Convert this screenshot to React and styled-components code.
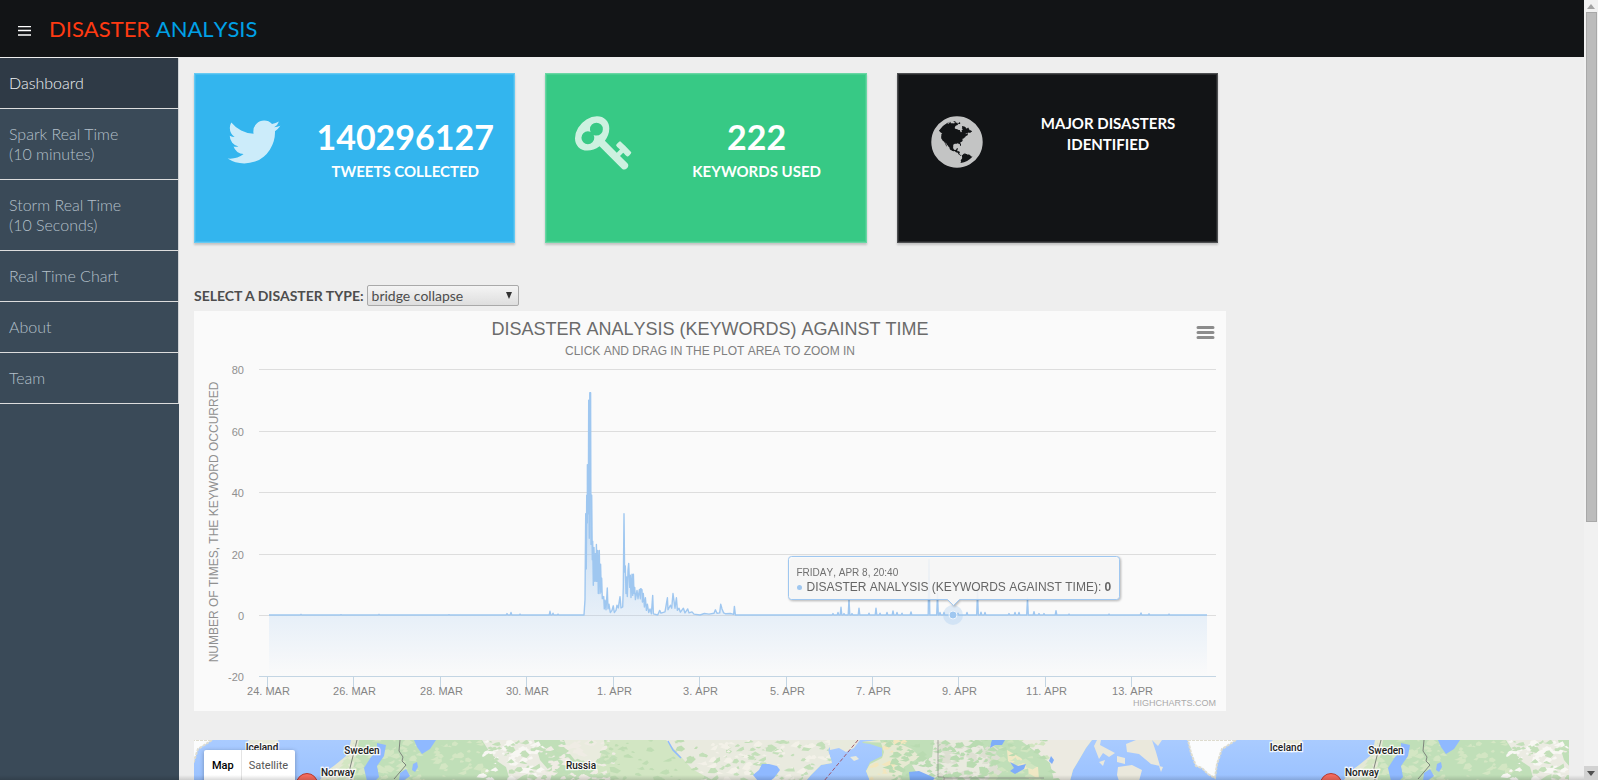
import React, { useLayoutEffect, useRef, useState } from "react";
import styled, { createGlobalStyle } from "styled-components";

const GlobalStyle = createGlobalStyle`
  *, *::before, *::after { box-sizing: border-box; }
  html, body { margin: 0; height: 100%; overflow: hidden; }
  body { font-family: Lato, "Liberation Sans", sans-serif; font-size: 14px; line-height: 20px; color: #4d4d4d; background: #eeeeee; }
  #root { height: 100%; }
`;

const Window = styled.div`
  display: flex;
  height: 100vh;
  position: relative;
`;

const Page = styled.div`
  flex: 1;
  min-width: 0;
  display: flex;
  flex-direction: column;
`;

const Header = styled.header`
  flex: none;
  display: flex;
  align-items: center;
  height: 58px;
  padding: 0 18px;
  gap: 18px;
  background: #121416;
  border-bottom: 1px solid #eeeeee;
`;

const MenuButton = styled.button`
  display: flex;
  padding: 4px 0 0;
  border: 0;
  background: none;
  color: #ffffff;
`;

const Brand = styled.a`
  font-size: 22px;
  font-kerning: none;
  line-height: 28px;
  text-decoration: none;
  color: #ff3a12;
`;

const BrandAccent = styled.span`
  color: #00a0e6;
`;

const Body = styled.div`
  flex: 1;
  min-height: 0;
  display: flex;
`;

const Sidebar = styled.nav`
  flex: none;
  width: 179px;
  background: #3a4a58;
`;

const NavLink = styled.a`
  display: block;
  padding: 15px 9px;
  font-size: 16px;
  font-weight: 300;
  line-height: 20px;
  text-decoration: none;
  white-space: pre-line;
  color: ${(p) => (p.$active ? "#f0f2f4" : "#b4c0ca")};
  background: ${(p) => (p.$active ? "#2f3a46" : "transparent")};
  border-bottom: 1px solid #dddddd;
  border-right: 1px solid #cfd2d5;
`;

const Main = styled.main`
  flex: 1;
  min-width: 0;
  display: flex;
  flex-direction: column;
  padding: 15px 15px 0;
  overflow: hidden;
`;

const Cards = styled.section`
  flex: none;
  display: grid;
  grid-template-columns: repeat(3, 1fr);
  gap: 30px;
  width: calc(75% - 7px);
`;

const Card = styled.article`
  display: flex;
  height: 170px;
  padding: 38px 13px 0 29px;
  color: #ffffff;
  background: ${(p) => p.$color};
  border: 1px solid ${(p) => p.$edge};
  box-shadow: 0 2px 2px rgba(0, 0, 0, 0.18), inset 0 0 0 1px rgba(255, 255, 255, 0.1);
`;

const CardIcon = styled.svg`
  flex: none;
  width: 60px;
  height: 60px;
  fill: #ffffff;
  opacity: 0.75;
`;

const CardText = styled.div`
  flex: 1;
  padding: 1px 0 0 25px;
  text-align: center;
`;

const CardNumber = styled.div`
  font-size: 34px;
  font-weight: 700;
  line-height: 48px;
`;

const CardLabel = styled.div`
  font-size: 15px;
  font-weight: 700;
  line-height: 21px;
`;

const Filter = styled.div`
  flex: none;
  display: flex;
  align-items: center;
  gap: 3px;
  margin: 42px 0 5px;
`;

const FilterLabel = styled.label`
  font-weight: 700;
`;

const Picker = styled.select`
  appearance: none;
  width: 152px;
  height: 21px;
  padding: 0 4px;
  font: inherit;
  color: #4d4d4d;
  border: 1px solid #a9a9a9;
  border-radius: 2px;
  background:
    url("data:image/svg+xml,%3Csvg xmlns='http://www.w3.org/2000/svg' width='6' height='7'%3E%3Cpath d='M0 0h6L3 7z' fill='%23333'/%3E%3C/svg%3E") no-repeat right 6px top 6px,
    linear-gradient(#f4f4f4, #dedede);
`;

const ChartPanel = styled.section`
  flex: none;
  width: calc(75% + 1px);
  height: 400px;
  background: #fafafa;
`;

const ChartSvg = styled.svg`
  display: block;
  width: 100%;
  height: 400px;
  font-family: "Liberation Sans", Arial, sans-serif;
  font-kerning: none;
`;

const TooltipGroup = styled.g`
  filter: drop-shadow(1px 1px 1px rgba(0, 0, 0, 0.3));
`;

const MapPanel = styled.section`
  flex: 1;
  min-height: 0;
  display: flex;
  position: relative;
  margin-top: 29px;
  overflow: hidden;
  background: #a3c8ff;
`;

const MapSvg = styled.svg`
  flex: 1;
  min-width: 0;
  height: 100%;
  font-family: Roboto, "Liberation Sans", sans-serif;
`;

const MapTypes = styled.div`
  position: absolute;
  left: 10px;
  top: 10px;
  display: flex;
  height: 34px;
  background: #ffffff;
  border-radius: 2px 2px 0 0;
  box-shadow: 0 1px 4px rgba(0, 0, 0, 0.3);
`;

const MapType = styled.button`
  padding: 0 7px 4px;
  border: 0;
  border-left: ${(p) => (p.$active ? "1px solid transparent" : "1px solid #e4e4e4")};
  background: none;
  font-family: Roboto, "Liberation Sans", sans-serif;
  font-size: 11px;
  font-weight: ${(p) => (p.$active ? 500 : 400)};
  color: ${(p) => (p.$active ? "#000000" : "#565656")};
`;

const BottomShade = styled.div`
  position: absolute;
  left: 0;
  right: 14px;
  bottom: 0;
  height: 5px;
  background: linear-gradient(transparent, rgba(0, 0, 0, 0.14));
  pointer-events: none;
`;

const ScrollBar = styled.div`
  flex: none;
  display: flex;
  flex-direction: column;
  width: 14px;
  background: #f1f1f1;
`;

const ScrollArrow = styled.button`
  display: flex;
  flex: none;
  align-items: center;
  justify-content: center;
  height: ${(p) => (p.$down ? 14 : 12)}px;
  padding: 0;
  border: 0;
  color: ${(p) => (p.$down ? "#505050" : "#a3a3a3")};
  background: ${(p) => (p.$down ? "#d2d2d2" : "#f1f1f1")};
`;

const ScrollTrack = styled.div`
  flex: 1;
  padding: 0 1px 0 2px;
`;

const ScrollThumb = styled.div`
  height: calc(68% - 3px);
  background: #bcbcbc;
  border: 1px solid #a8a8a8;
`;

const TWITTER =
  "M1684 408q-67 98-162 167 1 14 1 42 0 130-38 259.5t-115.5 248.5-184.5 210.5-258 146-323 54.5q-271 0-496-145 35 4 78 4 225 0 401-138-105-2-188-64.5t-114-159.5q33 5 61 5 43 0 85-11-112-23-185.5-111.5t-73.5-205.5v-4q68 38 146 41-66-44-105-115t-39-154q0-88 44-163 121 149 294.5 238.5t371.5 99.5q-8-38-8-74 0-134 94.5-228.5t228.5-94.5q140 0 236 102 109-21 205-78-37 115-142 178 93-10 186-50z";
const KEY =
  "M832 512q0-80-56-136t-136-56-136 56-56 136q0 42 19 83-41-19-83-19-80 0-136 56t-56 136 56 136 136 56 136-56 56-136q0-42-19-83 41 19 83 19 80 0 136-56t56-136zm851 704q0 17-49 66t-66 49q-9 0-28.5-16t-36.5-33-38.5-40-24.5-26l-96 96 220 220q28 28 28 68 0 42-39 81t-81 39q-40 0-68-28l-671-671q-176 131-365 131-163 0-265.5-102.5t-102.5-265.5q0-160 95-313t248-248 313-95q163 0 265.5 102.5t102.5 265.5q0 189-131 365l355 355 96-96q-3-3-26-24.5t-40-38.5-33-36.5-16-28.5q0-17 49-66t66-49q13 0 23 10 6 6 46 44.5t82 79.5 86.5 86 73 78 28.5 41z";
const GLOBE =
  "M896 128q209 0 385.5 103t279.5 279.5 103 385.5-103 385.5-279.5 279.5-385.5 103-385.5-103-279.5-279.5-103-385.5 103-385.5 279.5-279.5 385.5-103zm274 521q-2 1-9.5 9.5t-13.5 9.5q2 0 4.5-5t5-11 3.5-7q6-7 22-15 14-6 52-12 34-8 51 11-2-2 9.5-13t14.5-12q3-2 15-4.5t15-7.5l2-22q-12 1-17.5-7t-6.5-21q0 2-6 8 0-7-4.5-8t-11.5 1-9 1q-10-3-15-7.5t-8-16.5-4-15q-2-5-9.5-11t-9.5-10q-1-2-2.5-5.5t-3-6.5-4-5.5-5.5-2.5-7 5-7.5 10-4.5 5q-3-2-6-1.5t-4.5 1-4.5 3-5 3.5q-3 2-8.5 3t-8.5 2q15-5-1-11-10-4-16-3 9-4 7.5-12t-8.5-14h5q-1-4-8.5-8.5t-17.5-8.5-13-6q-8-5-34-9.5t-33-.5q-5 6-4.5 10.5t4 14 3.5 12.5q1 6-5.5 13t-6.5 12q0 7 14 15.5t10 21.5q-3 8-16 16t-16 12q-5 8-1.5 18.5t10.5 16.5q2 2 1.5 4t-3.5 4.5-5.5 4-6.5 3.5l-3 2q-11 5-20.5-6t-13.5-26q-7-25-16-30-23-8-29 1-5-13-41-26-25-9-58-4 6-1 0-15-7-15-19-12 3-6 4-17.5t1-13.5q3-13 12-23 1-1 7-8.5t9.5-13.5.5-6q35 4 50-11 5-5 11.5-17t10.5-17q9-6 14-5.5t14.5 5.5 14.5 5q14 1 15.5-11t-7.5-20q12 1 3-17-4-7-8-9-12-4-27 5-8 4 2 8-1-1-9.5 10.5t-16.5 17.5-16-5q-1-1-5.5-13.5t-9.5-13.5q-8 0-16 15 3-8-11-15t-24-8q19-12-8-27-7-4-20.5-5t-19.5 4q-5 7-5.5 11.5t5 8 10.5 5.5 11.5 4 8.5 3q14 10 8 14-2 1-8.5 3.5t-11.5 4.5-6 4q-3 4 0 14t-2 14q-5-5-9-17.5t-7-16.5q7 9-25 6l-10-1q-4 0-16 2t-20.5 1-13.5-8q-4-8 0-20 1-4 4-2-4-3-11-9.5t-10-8.5q-46 15-94 41 6 1 12-1 5-2 13-6.5t10-5.5q34-14 42-7l5-5q14 16 20 25-7-4-30-1-20 6-22 12 7 12 5 18-4-3-11.5-10t-14.5-11-15-5q-16 0-22 1-146 80-235 222 7 7 12 8 4 1 5 9t2.5 11 11.5-3q9 8 3 19 1-1 44 27 19 17 21 21 3 11-10 18-1-2-9-9t-9-4q-3 5 .5 18.5t10.5 12.5q-7 0-9.5 16t-2.5 35.5-1 23.5l2 1q-3 12 5.5 34.5t21.5 19.5q-13 3 20 43 6 8 8 9 3 2 12 7.5t15 10 10 10.5q4 5 10 22.5t14 23.5q-2 6 9.5 20t10.5 23q-1 0-2.5 1t-2.5 1q3 7 15.5 14t15.5 13q1 3 2 10t3 11 8 2q2-20-24-62-15-25-17-29-3-5-5.5-15.5t-4.5-14.5q2 0 6 1.5t8.5 3.5 7.5 4 2 3q-3 7 2 17.5t12 18.5 17 19 12 13q6 6 14 19.5t0 13.5q9 0 20 10t17 20q5 8 8 26t5 24q2 7 8.5 13.5t12.5 9.5l16 8 13 7q5 2 18.5 10.5t21.5 11.5q10 4 16 4t14.5-2.5 13.5-3.5q15-2 29 15t21 21q36 19 55 11-2 1 .5 7.5t8 15.5 9 14.5 5.5 8.5q5 6 18 15t18 15q6-4 7-9-3 8 7 20t18 10q14-3 14-32-31 15-49-18 0-1-2.5-5.5t-4-8.5-2.5-8.5 0-7.5 5-3q9 0 10-3.5t-2-12.5-4-13q-1-8-11-20t-12-15q-5 9-16 8t-16-9q0 1-1.5 5.5t-1.5 6.5q-13 0-15-1 1-3 2.5-17.5t3.5-22.5q1-4 5.5-12t7.5-14.5 4-12.5-4.5-9.5-17.5-2.5q-19 1-26 20-1 3-3 10.5t-5 11.5-9 7q-7 3-24 2t-24-5q-13-8-22.5-29t-9.5-37q0-10 2.5-26.5t3-25-5.5-24.5q3-2 9-9.5t10-10.5q2-1 4.5-1.5t4.5 0 4-1.5 3-6q-1-1-4-3-3-3-4-3 7 3 28.5-1.5t27.5 1.5q15 11 22-2 0-1-2.5-9.5t-.5-13.5q5 27 29 9 3 3 15.5 5t17.5 5q3 2 7 5.5t5.5 4.5 5-.5 8.5-6.5q10 14 12 24 11 40 19 44 7 3 11 2t4.5-9.5 0-14-1.5-12.5l-1-8v-18l-1-8q-15-3-18.5-12t1.5-18.5 15-18.5q1-1 8-3.5t15.5-6.5 12.5-8q21-19 15-35 7 0 11-9-1 0-5-3t-7.5-5-4.5-2q9-5 2-16 5-3 7.5-11t7.5-10q9 12 21 2 8-8 1-16 5-7 20.5-10.5t18.5-9.5q7 2 8-2t1-12 3-12q4-5 15-9t13-5l17-11q3-4 0-4 18 2 31-11 10-11-6-20 3-6-3-9.5t-15-5.5q3-1 11.5-.5t10.5-1.5q15-10-7-16-17-5-43 12zm-163 877q206-36 351-189-3-3-12.5-4.5t-12.5-3.5q-18-7-24-8 1-7-2.5-13t-8-9-12.5-8-11-7q-2-2-7-6t-7-5.5-7.5-4.5-8.5-2-10 1l-3 1q-3 1-5.5 2.5t-5.5 3-4 3 0 2.5q-21-17-36-22-5-1-11-5.5t-10.5-7-10-1.5-11.5 7q-5 5-6 15t-2 13q-7-5 0-17.5t2-18.5q-3-6-10.5-4.5t-12 4.5-11.5 8.5-9 6.5-8.5 5.5-8.5 7.5q-3 4-6 12t-5 11q-2-4-11.5-6.5t-9.5-5.5q2 10 4 35t5 38q7 31-12 48-27 25-29 40-4 22 12 26 0 7-8 20.5t-7 21.5q0 6 2 16z";

const NAV = ["Dashboard", "Spark Real Time\n(10 minutes)", "Storm Real Time\n(10 Seconds)", "Real Time Chart", "About", "Team"];

/* Mentions as [offset along a 938 unit time axis, count]; the burst is listed from its own start. */
const BURST_START = 12;
const BURST = [[303, 0],[304, 5],[304.7, 33],[305.3, 15],[305.7, 39],[306.3, 30],[306.4, 49],[307.3, 33],[307.7, 70],[308.3, 25],[308.8, 72.4],[309.6, 72.4],[310, 23],[310.7, 39],[311.3, 18],[311.7, 24],[312.3, 9.7],[313, 22],[313.7, 11],[314.3, 20],[315, 11],[315.4, 23],[316, 11],[316.7, 21],[317.3, 7],[318.3, 21],[319, 7],[319.6, 16.5],[320.3, 7.5],[320.7, 12],[321.3, 5.3],[322.7, 6],[323.3, 2],[324, 4.8],[325, 1.7],[326.3, 8.8],[327, 2],[328, 3.5],[329.3, 0.8],[331, 1.5],[332.3, 3],[333.3, 0.8],[335, 1.5],[336, 3.2],[337.3, 2.3],[339, 6],[340, 2.3],[341.7, 2.6],[342.3, 9],[343, 33],[343.6, 14],[344.3, 16],[345, 7],[345.7, 12.4],[346.3, 6],[347, 14.6],[347.7, 16.8],[348.7, 9],[349.3, 13],[350, 5.7],[351, 13.3],[351.7, 6.4],[352.4, 13.3],[353, 7],[353.7, 9],[354.4, 5],[356, 8],[357, 5.3],[358.4, 8.3],[359.4, 5.3],[359.7, 8.6],[361, 8.2],[361.4, 4.2],[362.3, 7],[363.4, 2.6],[364.4, 5.6],[365.4, 1.5],[366.4, 3.5],[367.7, 0.8],[369, 2],[370.4, 0.4],[371.7, 6.4],[372.4, 0.4],[376.7, 0],[378.7, 1.5],[380, 0.6],[384, 1],[386.4, 5.6],[387, 1.7],[389.4, 3.2],[390.7, 2.2],[392, 7],[393.4, 3.7],[394, 2.2],[395.4, 5.6],[396.4, 1.5],[398, 2.2],[399.4, 0.9],[402.4, 2.2],[404, 0.7],[406.7, 2],[408, 0.7],[411, 1],[413, 0.3],[419, 0],[423.4, 0.5],[428, 0.3],[433, 0.6],[434.4, 1.7],[436, 0.6],[438.7, 0.7],[439.7, 3.5],[441, 2],[442.7, 0.7],[444.7, 0.4],[449.4, 0.5],[452.7, 0.2],[453.4, 2.8],[454.4, 0]];
const SPIKES = [[32, 0.2],[72, 0.1],[110, 0.2],[180, 0.1],[238, 0.5],[242, 0.8],[251, 0.3],[281, 1.2],[284, 0.6],[289, 0.3],[564, 0.5],[569, 0.8],[572, 2.5],[575, 0.5],[580, 5],[583, 0.5],[590, 2.2],[600, 0.6],[607, 2.2],[611, 0.6],[618, 0.8],[624, 1.3],[628, 0.8],[633, 0.6],[642, 1],[660, 18],[668.5, 7],[671, 0.8],[675, 0.8],[689, 0.6],[698, 0.8],[708.5, 7.6],[712, 0.9],[716, 0.8],[740, 0.5],[746, 0.8],[750, 0.8],[758.5, 5.5],[765, 1.1],[770, 0.5],[775, 0.5],[787, 1.4],[800, 0.3],[840, 0.3],[872, 0.7],[880, 0.4],[900, 0.3]];
const spikePoints = SPIKES.flatMap(([t, v]) => [[t - 0.8, 0], [t, v], [t + 0.8, 0]]);
const SERIES = [
  [0, 0],
  ...spikePoints.filter((p) => p[0] < 303),
  ...BURST.map(([t, v]) => [t + BURST_START, v]),
  ...spikePoints.filter((p) => p[0] > 470),
  [938, 0],
];
const DATES = ["24. MAR", "26. MAR", "28. MAR", "30. MAR", "1. APR", "3. APR", "5. APR", "7. APR", "9. APR", "11. APR", "13. APR"];

function Chart() {
  const ref = useRef(null);
  const [width, setWidth] = useState(1032);
  useLayoutEffect(() => {
    const measure = () => setWidth(Math.round(ref.current.getBoundingClientRect().width));
    measure();
    const observer = new ResizeObserver(measure);
    observer.observe(ref.current);
    return () => observer.disconnect();
  }, []);

  const left = 65;
  const right = width - 10;
  const scale = (right - left - 19) / 938;
  const x = (t) => 75 + t * scale;
  const y = (v) => 304 - v * 3.07;
  const line = SERIES.map(([t, v]) => `${x(t).toFixed(1)},${y(v).toFixed(1)}`).join(" ");
  const mx = Math.round(x(684));

  return (
    <ChartPanel ref={ref}>
      <ChartSvg role="img" aria-label="Disaster analysis (keywords) against time">
        <defs>
          <linearGradient id="area" gradientUnits="userSpaceOnUse" x1="0" y1="82" x2="0" y2="365">
            <stop offset="0" stopColor="#9fc7f0" />
            <stop offset="1" stopColor="#9fc7f0" stopOpacity="0" />
          </linearGradient>
        </defs>
        <text x={width / 2} y="24" fontSize="18" fill="#6b6b6b" textAnchor="middle">DISASTER ANALYSIS (KEYWORDS) AGAINST TIME</text>
        <text x={width / 2} y="44" fontSize="12" fill="#808080" textAnchor="middle">CLICK AND DRAG IN THE PLOT AREA TO ZOOM IN</text>
        <path d={`M${width - 28} 16.5h15M${width - 28} 21.5h15M${width - 28} 26.5h15`} stroke="#8c8c8c" strokeWidth="3" strokeLinecap="round" />
        <text transform="translate(24 211) rotate(-90)" fontSize="12" fill="#909090" textAnchor="middle">NUMBER OF TIMES, THE KEYWORD OCCURRED</text>
        {[80, 60, 40, 20, 0, -20].map((v, i) => {
          const gy = [58, 120, 181, 243, 304, 365][i] + 0.5;
          return (
            <g key={v}>
              <path d={`M${left} ${gy}H${right}`} stroke={v < 0 ? "#c3d5e3" : "#dddddd"} />
              <text x="50" y={gy + 4.5} fontSize="11" fill="#909090" textAnchor="end">{v}</text>
            </g>
          );
        })}
        {DATES.map((d, i) => {
          const tx = Math.round(73 + i * 86.43 * scale) + 0.5;
          return (
            <g key={d}>
              <path d={`M${tx} 366v10`} stroke="#c3d5e3" />
              <text x={tx + 1} y="384" fontSize="11" fill="#858585" textAnchor="middle">{d}</text>
            </g>
          );
        })}
        <polygon points={`${x(0)},365 ${line} ${x(938)},365`} fill="url(#area)" />
        <polyline points={line} fill="none" stroke="#9fc7f0" strokeWidth="1.4" strokeLinejoin="round" />
        <circle cx={mx} cy="304" r="10" fill="#9fc7f0" opacity="0.3" />
        <circle cx={mx} cy="304" r="4" fill="#9fc7f0" stroke="#eef5fc" />
        <TooltipGroup transform={`translate(${mx - 164.5} 245.5)`}>
          <path d="M3 0H328q3 0 3 3V40q0 3-3 3H171l-6 6-6-6H3q-3 0-3-3V3q0-3 3-3z" fill="#ffffff" fillOpacity="0.86" stroke="#9fc7f0" />
          <text x="8" y="19" fontSize="10" fill="#707070">FRIDAY, APR 8, 20:40</text>
          <circle cx="11" cy="31" r="2.5" fill="#9fc7f0" />
          <text x="18" y="34" fontSize="12" fill="#666666">
            DISASTER ANALYSIS (KEYWORDS AGAINST TIME): <tspan fontWeight="700">0</tspan>
          </text>
        </TooltipGroup>
        <text x={right} y="395" fontSize="9" fill="#aaaaaa" textAnchor="end">HIGHCHARTS.COM</text>
      </ChartSvg>
    </ChartPanel>
  );
}

/* Deterministic scatter of small land-cover patches over the map's terrain. */
function patches(seed, from, to, count, color) {
  let s = seed;
  const rnd = () => {
    s = (s * 16807) % 2147483647;
    return s / 2147483647;
  };
  let d = "";
  for (let i = 0; i < count; i += 1) {
    const px = from + rnd() * (to - from);
    const py = rnd() * 42;
    const r = 1 + rnd() * 3;
    d += `M${px.toFixed(1)} ${py.toFixed(1)}l${(r * 1.2).toFixed(1)} ${(-r * rnd()).toFixed(1)} ${(r * rnd() * 2).toFixed(1)} ${r.toFixed(1)} ${(-r).toFixed(1)} ${(r * rnd()).toFixed(1)} ${(-r * 1.8).toFixed(1)} ${(-r * rnd() * 0.6).toFixed(1)}z`;
  }
  return <path d={d} fill={color} />;
}

function World() {
  return (
    <>
      <path d="M55 0H84l1 4-4 2-3 2-9 2-9-3-6 0 2-3-3-2z" fill="#e9eadc" />
      <path d="M160 0H640l-6 10 4 13-11 2-10 10-5 6H128l3-8 12-8 10-9 5-6z" fill="#c0dfb8" />
      <path d="M157 0h8l-2 12-4 16 1 12H126l4-7 11-8 11-9 3-6z" fill="#e4e8d4" />
      <path d="M288 0h52l6 20 12 14-2 7h-40l-4-14-12-8z" fill="#ebebe2" />
      <path d="M370 0h40l4 18-16 10-14-4-8-10z" fill="#e9ebde" />
      <path d="M412 0h60l38 12v29H420l-20-6z" fill="#d2e6c3" />
      <path d="M472 0h168l-6 10 4 13-11 2-10 10-5 6H520l-22-12z" fill="#e9eadf" />
      <clipPath id="asia"><path d="M160 0H640l-6 10 4 13-11 2-10 10-5 6H128l3-8 12-8 10-9 5-6z" /></clipPath>
      <g clipPath="url(#asia)">
        {patches(11, 130, 290, 110, "#d3e6c3")}
        {patches(29, 285, 345, 60, "#f8f7f3")}
        {patches(83, 340, 420, 70, "#efece4")}
        {patches(41, 290, 420, 80, "#c3dfb9")}
        {patches(57, 410, 510, 45, "#bfddb3")}
        {patches(71, 505, 640, 80, "#c3dfb9")}
        {patches(97, 505, 640, 60, "#f3f1e8")}
      </g>
      <path d="M183 3l9 2-2 11-7 10 2 11-4 4h-8l-3-13 7-11 6-6zM220 0h22l-6 9-8 5-5-7zM219 24l4-2 1 5-3 5-3-2zM206 33l6-4 4 7-7 5h-4zM583 26l3 4-6 8-4 3h-12l-5-6 6-5 3-6 7 0z" fill="#8fb9ff" />
      <path d="M474 1l5 9 8 8" fill="none" stroke="#8fb9ff" strokeWidth="1.5" />
      <path d="M206 0l-1 11 4 6-1 4 4 4-12 14M163 0l-3 12-4 16 1 12" fill="none" stroke="#7f857d" />
      <path d="M636 0h30l-6 8-8 4-7-4-9 2zM656 17l6-1 3 3-5 2z" fill="#e8eadd" />
      <path d="M668 2l15-2h215l-6 8-7 12-6 10-3 11H676l-4-10 4-9 12-6 0-8-12-4-7-1z" fill="#c0dfb8" />
      <path d="M668 2l18-2 4 12-2 6-12 6-4 7 4 10h30l4-14 16-10-8-8-14-6z" fill="#e6e9d2" />
      <path d="M740 0h46l8 18 6 23H744l-20-6-6-10 20-8z" fill="#e9eadf" />
      <path d="M826 0h72l-6 8-7 12-6 10-3 11H860l-4-18-18-14z" fill="#eceae1" />
      <path d="M813 10l14 8 8 10-9 3-12-10zM834 26l10 1 1 12h-10z" fill="#f0e8c4" />
      <clipPath id="america"><path d="M668 2l15-2h215l-6 8-7 12-6 10-3 11H676l-4-10 4-9 12-6 0-8-12-4-7-1z" /></clipPath>
      <g clipPath="url(#america)">
        {patches(17, 672, 712, 24, "#f3e6bd")}
        {patches(23, 690, 745, 60, "#b9dbb1")}
        {patches(37, 742, 800, 80, "#dddfd2")}
        {patches(43, 742, 800, 45, "#b9dbb1")}
        {patches(67, 795, 850, 30, "#d0e5c0")}
        {patches(89, 742, 860, 35, "#b9dbb1")}
      </g>
      <path d="M798 0h13l-3 5-7 0-5 3 1-5zM816 22l8 4 8-2-2 5-9 5-5-3 4-3zM857 16l3 4-2 4-3-3zM715 32l10-1 16 7-3 3h-22z" fill="#7fadf8" />
      <path d="M744 0v37h6v4M750 38H850" fill="none" stroke="#898d86" strokeOpacity="0.7" />
      <path d="M664 0L630 41" fill="none" stroke="#a0586e" strokeDasharray="4 2" />
      <path d="M900 6l3-6h4l-1 5 15 8-6 4-6-4-4 6zM932 4l10-4h16l4 12 4 14-9-2-12-10-12-2zM923 16l8 2 0 6-8-2zM924 27l14-2 10 5-3 11h-20l-2-6zM905 22l6-2-2 6zM958 0h10l-4 6zM965 26l4 1-2 5z" fill="#eae8dc" />
    </>
  );
}

function Greenland() {
  return (
    <path d="M994 0h48l-6 4-8 5-5 15-2 14-7-4-6-6-6-2-5-13z" fill="#fbfcfd" stroke="#dedccf" strokeWidth="2" strokeDasharray="3 1" />
  );
}

function MapLabel({ x, y, children }) {
  return (
    <text x={x} y={y} fontSize="10" fontWeight="500" fill="#222222" stroke="#ffffff" strokeOpacity="0.85" strokeWidth="2.5" paintOrder="stroke" textAnchor="middle">
      {children}
    </text>
  );
}

function WorldMap() {
  return (
    <MapPanel>
      <MapSvg viewBox="0 0 1375 40" preserveAspectRatio="xMinYMin slice" role="img" aria-label="Map of reported disasters">
        <defs>
          <linearGradient id="sea" x1="0" x2="0" y1="0" y2="1">
            <stop offset="0" stopColor="#a9cbff" />
            <stop offset="1" stopColor="#9bc2ff" />
          </linearGradient>
        </defs>
        <rect width="1375" height="40" fill="url(#sea)" />
        <World />
        <g transform="translate(1024 0)"><World /></g>
        <Greenland />
        <g transform="translate(-1024 0)"><Greenland /></g>
        {[0, 1024].map((shift) => (
          <g key={shift} transform={`translate(${shift} 0)`}>
            <MapLabel x={68} y={11}>Iceland</MapLabel>
            <MapLabel x={168} y={14}>Sweden</MapLabel>
            <MapLabel x={144} y={36}>Norway</MapLabel>
            <circle cx="113" cy="44" r="10.5" fill="#f46a5e" stroke="#b83a30" />
          </g>
        ))}
        <MapLabel x={387} y={29}>Russia</MapLabel>
      </MapSvg>
      <MapTypes>
        <MapType type="button" $active>Map</MapType>
        <MapType type="button">Satellite</MapType>
      </MapTypes>
    </MapPanel>
  );
}

export default function App() {
  return (
    <Window>
      <GlobalStyle />
      <Page>
        <Header>
          <MenuButton type="button" aria-label="Menu">
            <svg width="13" height="10" viewBox="0 0 13 10">
              <path d="M0 .5h13M0 4.5h13M0 9h13" stroke="currentColor" strokeWidth="1.4" />
            </svg>
          </MenuButton>
          <Brand href="#">
            DISASTER <BrandAccent>ANALYSIS</BrandAccent>
          </Brand>
        </Header>
        <Body>
          <Sidebar>
            {NAV.map((item, i) => (
              <NavLink key={item} href="#" $active={i === 0}>{item}</NavLink>
            ))}
          </Sidebar>
          <Main>
            <Cards>
              <Card $color="#33b5ee" $edge="#66caf3">
                <CardIcon viewBox="0 0 1792 1792" aria-hidden="true"><path d={TWITTER} /></CardIcon>
                <CardText>
                  <CardNumber>140296127</CardNumber>
                  <CardLabel>TWEETS COLLECTED</CardLabel>
                </CardText>
              </Card>
              <Card $color="#37c985" $edge="#69d7a4">
                <CardIcon viewBox="0 0 1792 1792" aria-hidden="true"><path d={KEY} /></CardIcon>
                <CardText>
                  <CardNumber>222</CardNumber>
                  <CardLabel>KEYWORDS USED</CardLabel>
                </CardText>
              </Card>
              <Card $color="#121416" $edge="#4d4f51">
                <CardIcon viewBox="0 0 1792 1792" aria-hidden="true"><path d={GLOBE} /></CardIcon>
                <CardText>
                  <CardLabel>MAJOR DISASTERS IDENTIFIED</CardLabel>
                </CardText>
              </Card>
            </Cards>
            <Filter>
              <FilterLabel htmlFor="disaster">SELECT A DISASTER TYPE:</FilterLabel>
              <Picker id="disaster" defaultValue="bridge collapse">
                <option>bridge collapse</option>
              </Picker>
            </Filter>
            <Chart />
            <WorldMap />
          </Main>
        </Body>
      </Page>
      <ScrollBar>
        <ScrollArrow type="button" aria-label="Scroll up">
          <svg width="8" height="5"><path d="M0 5h8L4 0z" fill="currentColor" /></svg>
        </ScrollArrow>
        <ScrollTrack><ScrollThumb /></ScrollTrack>
        <ScrollArrow type="button" aria-label="Scroll down" $down>
          <svg width="8" height="5"><path d="M0 0h8L4 5z" fill="currentColor" /></svg>
        </ScrollArrow>
      </ScrollBar>
      <BottomShade />
    </Window>
  );
}
